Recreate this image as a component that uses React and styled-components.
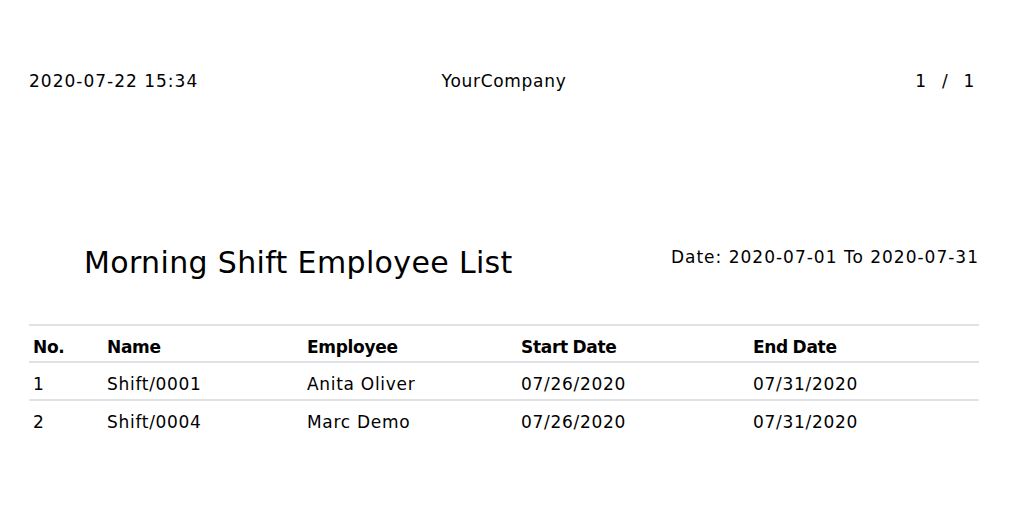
import React from "react";
import styled, { createGlobalStyle } from "styled-components";

const GlobalStyle = createGlobalStyle`
  html, body {
    margin: 0;
    padding: 0;
    background: #fff;
  }
  body {
    font-family: "DejaVu Sans", Verdana, sans-serif;
    color: #000;
  }
`;

const Page = styled.div`
  width: 950px;
  padding: 0 55px 0 29px;
`;

const Header = styled.div`
  display: grid;
  grid-template-columns: 1fr auto 1fr;
  align-items: center;
  padding-top: 70px;
  font-size: 17px;
  letter-spacing: 0.7px;
  line-height: 22px;
`;

const HeaderCell = styled.div`
  text-align: ${({ $align }) => $align || "left"};
  letter-spacing: ${({ $align }) => (!$align ? "1px" : "0.7px")};
  padding-right: ${({ $align }) => ($align === "right" ? "4px" : "0")};
`;

const Pager = styled.span`
  word-spacing: 9px;
`;

const TitleRow = styled.div`
  display: flex;
  justify-content: space-between;
  align-items: flex-start;
  margin-top: 153px;
  padding-left: 55px;
`;

const Title = styled.h2`
  margin: 0;
  font-size: 30px;
  font-weight: normal;
  letter-spacing: 0.35px;
  line-height: 36px;
`;

const Period = styled.div`
  font-size: 17px;
  letter-spacing: 1px;
  line-height: 22px;
  margin-top: 1px;
`;

const Table = styled.table`
  width: 100%;
  margin-top: 43px;
  border-collapse: collapse;
  table-layout: fixed;
  font-size: 17px;
  letter-spacing: 0.7px;
`;

const Col = styled.col`
  width: ${({ $w }) => $w}px;
`;

const Th = styled.th`
  text-align: left;
  font-weight: bold;
  letter-spacing: -0.3px;
  word-spacing: -1px;
  padding: 10px 4px 3px;
  line-height: 22px;
  border-top: 2px solid #dee2e6;
  border-bottom: 2px solid #dee2e6;
`;

const Td = styled.td`
  padding: 10px 4px 4px;
  line-height: 22px;
  border-bottom: ${({ $last }) => ($last ? "none" : "2px solid #dee2e6")};
`;

const columns = [
  { key: "no", label: "No.", w: 74 },
  { key: "name", label: "Name", w: 200 },
  { key: "employee", label: "Employee", w: 214 },
  { key: "start", label: "Start Date", w: 232 },
  { key: "end", label: "End Date", w: 230 },
];

const rows = [
  { no: "1", name: "Shift/0001", employee: "Anita Oliver", start: "07/26/2020", end: "07/31/2020" },
  { no: "2", name: "Shift/0004", employee: "Marc Demo", start: "07/26/2020", end: "07/31/2020" },
];

export default function App() {
  return (
    <>
      <GlobalStyle />
      <Page>
        <Header>
          <HeaderCell>2020-07-22 15:34</HeaderCell>
          <HeaderCell $align="center">YourCompany</HeaderCell>
          <HeaderCell $align="right">
            <Pager>1 / 1</Pager>
          </HeaderCell>
        </Header>

        <TitleRow>
          <Title>Morning Shift Employee List</Title>
          <Period>Date: 2020-07-01 To 2020-07-31</Period>
        </TitleRow>

        <Table>
          <colgroup>
            {columns.map((c) => (
              <Col key={c.key} $w={c.w} />
            ))}
          </colgroup>
          <thead>
            <tr>
              {columns.map((c) => (
                <Th key={c.key}>{c.label}</Th>
              ))}
            </tr>
          </thead>
          <tbody>
            {rows.map((r, i) => (
              <tr key={r.no}>
                {columns.map((c) => (
                  <Td key={c.key} $last={i === rows.length - 1}>{r[c.key]}</Td>
                ))}
              </tr>
            ))}
          </tbody>
        </Table>
      </Page>
    </>
  );
}
